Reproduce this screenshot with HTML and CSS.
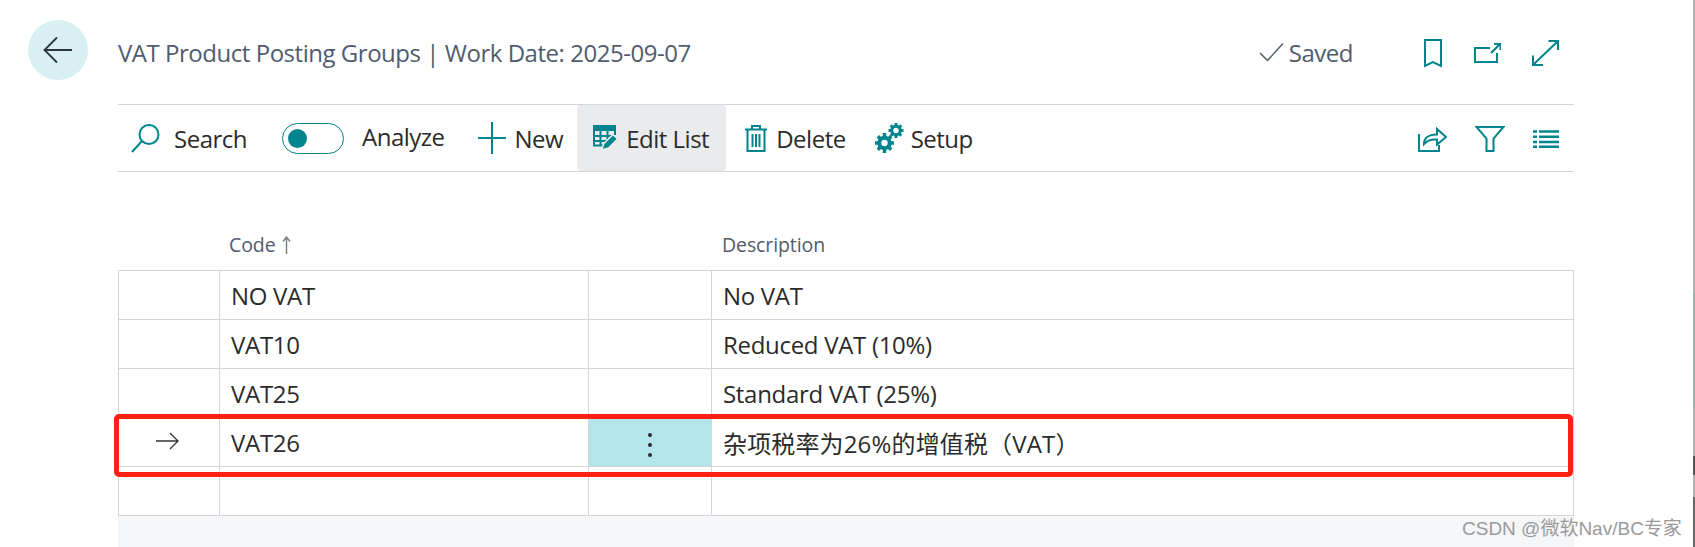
FILE: index.html
```html
<!DOCTYPE html>
<html lang="en">
<head>
    <meta charset="UTF-8">
    <title>VAT Product Posting Groups</title>
    <link rel="stylesheet" href="styles.css">
</head>
<body>
<div class="page">
    <div class="rail">
        <button class="back-button" aria-label="Back">
            <svg width="30" height="30" viewBox="0 0 30 30"><path d="M14 2.500 1.500 15 14 27.500M1.500 15H29"/></svg>
        </button>
    </div>
    <main class="content">
        <header class="title-bar">
            <h1 class="title">VAT Product Posting Groups | Work Date: 2025-09-07</h1>
            <div class="saved">
                <svg width="25" height="20" viewBox="0 0 25 20"><path d="M1 11l7.500 7.500L24 1.500"/></svg>
                <span>Saved</span>
            </div>
            <div class="title-icons">
                <svg class="icon" width="18" height="29" viewBox="0 0 18 29"><path d="M1 1h16v26l-8-4-8 4z"/></svg>
                <svg class="icon" width="27" height="20" viewBox="0 0 27 20"><path d="M23 10v9H1V5h15M17 10 26 1M20 1h6.500v6"/></svg>
                <svg class="icon" width="27" height="26" viewBox="0 0 27 26"><path d="M1.500 24.500 25.500 1.500M16.500 1h9.500v9M1 15.500V25h10"/></svg>
            </div>
        </header>

        <nav class="toolbar">
            <a class="tool tool-search">
                <svg class="icon" width="30" height="30" viewBox="0 0 30 30"><circle cx="18" cy="11.500" r="9.500"/><path d="M11 18 1 29"/></svg>
                <span>Search</span>
            </a>
            <a class="tool tool-analyze">
                <span class="toggle"><span class="toggle-knob"></span></span>
                <span class="analyze-label">Analyze</span>
            </a>
            <a class="tool tool-new">
                <svg class="icon" width="28" height="32" viewBox="0 0 28 32"><path d="M14 0v32M0 16h28"/></svg>
                <span>New</span>
            </a>
            <a class="tool tool-edit is-active">
                <svg width="27" height="26" viewBox="0 0 27 26">
                    <path class="fill" d="M0 0h23v6H0z"/>
                    <path class="icon-line" d="M1 6v14.500h10M1 11h20M1 16h13M7.500 6v14M14.500 6v9M22 6v4"/>
                    <path class="pencil" d="M8.500 25l2.500-6.500L20 9.500l4.500 4.500-9 9z"/>
                </svg>
                <span>Edit List</span>
            </a>
            <a class="tool tool-delete">
                <svg class="icon" width="22" height="27" viewBox="0 0 22 27"><path d="M0 4.500h22M7 4.500V1h8v3.500M2.500 4.500V26h17V4.500M7.500 9v13M11 9v13M14.500 9v13"/></svg>
                <span>Delete</span>
            </a>
            <a class="tool tool-setup">
                <svg width="29" height="30" viewBox="0 0 29 30">
                    <path class="gear-teeth" d="M21 0v15M13.500 7.500h15M15.700 2.200l10.600 10.600M26.300 2.200 15.700 12.800"/>
                    <circle class="gear-body" cx="21" cy="7.500" r="4.200"/>
                    <path class="gear-teeth big" d="M9.500 10v20M0 20h19M2.800 13.300l13.400 13.400M16.200 13.300 2.800 26.700"/>
                    <circle class="gear-body big" cx="9.500" cy="20" r="5.200"/>
                </svg>
                <span>Setup</span>
            </a>
            <div class="tool-icons">
                <svg class="icon" width="29" height="26" viewBox="0 0 29 26"><path d="M1 8v17h20v-6M6 18c0-6 5-10 13-9.500V3l9 8-9 7.500v-5c-6-.5-10 1-13 4.500z"/></svg>
                <svg class="icon" width="30" height="26" viewBox="0 0 30 26"><path d="M1.500 1h27L18.500 12.500V25h-7V12.500z"/></svg>
                <svg class="icon icon-list" width="26" height="18" viewBox="0 0 26 18"><path d="M0 1.500h4M6 1.500h20M0 6.800h4M6 6.800h20M0 12h4M6 12h20M0 16.800h4M6 16.800h20"/></svg>
            </div>
        </nav>

        <div class="grid-head">
            <div class="col-head head-code">
                <span>Code</span>
                <svg class="sort-arrow" width="9" height="18" viewBox="0 0 9 18"><path d="M4.500 1v17M1 5.500 4.500 1 8 5.500"/></svg>
            </div>
            <div class="col-head">Description</div>
        </div>

        <table class="grid">
            <tbody>
            <tr>
                <td class="cell-mark"></td><td class="cell-code">NO VAT</td><td class="cell-menu"></td><td>No VAT</td>
            </tr>
            <tr>
                <td class="cell-mark"></td><td class="cell-code">VAT10</td><td class="cell-menu"></td><td>Reduced VAT (10%)</td>
            </tr>
            <tr>
                <td class="cell-mark"></td><td class="cell-code">VAT25</td><td class="cell-menu"></td><td>Standard VAT (25%)</td>
            </tr>
            <tr class="current">
                <td class="cell-mark">
                    <svg width="23" height="18" viewBox="0 0 23 18"><path d="M0 9h22M14 1l8 8-8 8"/></svg>
                </td>
                <td class="cell-code">VAT26</td>
                <td class="cell-menu"><span class="dots"><i></i><i></i><i></i></span></td>
                <td class="cell-cjk">杂项税率为26%的增值税（VAT）</td>
            </tr>
            <tr>
                <td class="cell-mark"></td><td class="cell-code"></td><td class="cell-menu"></td><td></td>
            </tr>
            </tbody>
        </table>
        <div class="grid-foot"></div>
    </main>
</div>

<div class="highlight"></div>
<div class="watermark">CSDN @微软Nav/BC专家</div>
<div class="screen-edge"><i class="edge-a"></i><i class="edge-b"></i><i class="edge-c"></i><i class="edge-d"></i><i class="edge-e"></i><i class="edge-f"></i></div>
</body>
</html>
```

FILE: styles.css
```css
html, body {
    margin: 0;
    padding: 0;
    height: 547px;
    overflow: hidden;
    background-color: #fff;
    font-family: "Open Sans", "Noto Sans CJK SC", sans-serif;
    color: #2b2b2b;
}

.page {
    display: flex;
    height: 547px;
}

.rail {
    width: 118px;
    padding: 20px 0 0 28px;
    box-sizing: border-box;
}

.back-button {
    width: 60px;
    height: 60px;
    padding: 0;
    border: none;
    border-radius: 50%;
    background-color: #d8f0f3;
    display: flex;
    align-items: center;
    justify-content: center;
}

.back-button path {
    fill: none;
    stroke: #2f3438;
    stroke-width: 1.800;
}

.content {
    width: 1456px;
}

svg path, svg circle {
    fill: none;
}

.icon path, .icon circle, .icon-line {
    stroke: #00848d;
    stroke-width: 2;
}

.fill {
    fill: #00848d !important;
}

/* title row */
.title-bar {
    height: 104px;
    display: flex;
    align-items: center;
    border-bottom: 1px solid #d3d5da;
    box-sizing: content-box;
}

.title {
    flex: 1;
    margin: 0;
    font-size: 24px;
    font-weight: 400;
    color: #505c6d;
    letter-spacing: -0.47px;
    white-space: nowrap;
}

.saved {
    display: flex;
    align-items: center;
    gap: 5px;
    margin-right: 71px;
    font-size: 24px;
    letter-spacing: -0.5px;
    color: #505c6d;
}

.saved path {
    stroke: #505c6d;
    stroke-width: 1.500;
}

.title-icons {
    display: flex;
    align-items: center;
    gap: 31.500px;
    margin: 2px 15px 0 0;
}

/* action bar */
.toolbar {
    height: 66px;
    display: flex;
    align-items: center;
    border-bottom: 1px solid #d3d5da;
    font-size: 24px;
    letter-spacing: -0.5px;
}

.tool {
    display: flex;
    align-items: center;
    height: 100%;
    white-space: nowrap;
}

.tool-search {
    padding-left: 13px;
    gap: 13px;
}

.tool-analyze {
    margin-left: 35px;
    gap: 18px;
}

.toggle {
    width: 55px;
    height: 29px;
    border: 1px solid #00848d;
    border-radius: 16px;
    display: flex;
    align-items: center;
    padding-left: 5px;
}

.toggle-knob {
    width: 19px;
    height: 19px;
    border-radius: 50%;
    background-color: #00848d;
}

.analyze-label {
    margin-bottom: 4px;
}

.tool-new {
    margin-left: 33px;
    gap: 9px;
}

.tool-edit {
    margin-left: 14px;
    width: 149px;
    padding-left: 16px;
    gap: 6px;
    box-sizing: border-box;
    background-color: #eaebed;
    border-radius: 4px;
}

.pencil {
    fill: #00848d !important;
    stroke: #eaebed;
    stroke-width: 1.500;
}

.tool-delete {
    margin-left: 19px;
    gap: 9px;
}

.tool-setup {
    margin-left: 29px;
    gap: 7px;
}

.gear-teeth {
    stroke: #00848d;
    stroke-width: 3;
}

.gear-teeth.big {
    stroke-width: 3.500;
}

.gear-body {
    fill: #fff !important;
    stroke: #00848d;
    stroke-width: 3;
}

.gear-body.big {
    stroke-width: 4;
}

.tool-icons {
    margin: 2px 15px 0 auto;
    display: flex;
    align-items: center;
    gap: 28px;
}

.icon-list path {
    stroke-width: 2.500;
}

/* list */
.grid-head {
    height: 98px;
    display: flex;
    align-items: flex-end;
    box-sizing: border-box;
    padding-bottom: 12px;
    font-size: 19.500px;
    letter-spacing: -0.1px;
    color: #505c6d;
}

.col-head {
    margin-left: 383px;
    height: 27px;
    display: flex;
    align-items: center;
    gap: 6px;
}

.col-head.head-code {
    margin-left: 111px;
    width: 110px;
}

.sort-arrow path {
    stroke: #7b8288;
    stroke-width: 1.500;
}

.grid {
    width: 1456px;
    border-collapse: collapse;
    table-layout: fixed;
    font-size: 24px;
    letter-spacing: -0.3px;
}

.grid td {
    height: 49px;
    padding: 0 0 0 11px;
    border: 1px solid #d3d5da;
    box-sizing: border-box;
    white-space: nowrap;
}

.grid .cell-mark {
    width: 101px;
    padding: 0 3px 0 0;
    text-align: center;
}

.cell-mark svg {
    display: block;
    margin: 0 auto 2px;
}

.cell-mark path {
    stroke: #2f3438;
    stroke-width: 1.300;
}

.grid .cell-code {
    width: 369px;
}

.grid .cell-menu {
    width: 123px;
    padding: 0;
    text-align: center;
}

.grid .cell-cjk {
    letter-spacing: 0.15px;
}

.current .cell-menu {
    background-color: #b2e6ea;
}

.dots {
    display: inline-flex;
    flex-direction: column;
    gap: 6px;
    vertical-align: middle;
}

.dots i {
    width: 4px;
    height: 4px;
    border-radius: 50%;
    background-color: #2b2b2b;
}

.grid-foot {
    height: 32px;
    background-color: #f5f6f8;
}

/* marks on top of the screenshot */
.highlight {
    position: absolute;
    left: 114px;
    top: 414px;
    width: 1459px;
    height: 63px;
    box-sizing: border-box;
    border: 5px solid #ff2015;
    border-radius: 5px;
}

.watermark {
    position: absolute;
    left: 1462px;
    top: 513px;
    font-family: "Liberation Sans", "Noto Sans CJK SC", sans-serif;
    font-size: 19px;
    color: #9a9a9a;
    white-space: nowrap;
}

.screen-edge {
    position: absolute;
    right: 0;
    top: 0;
    width: 2px;
    height: 547px;
    display: flex;
    flex-direction: column;
}

.screen-edge i {
    display: block;
}

.edge-a { height: 293px; background-color: #b5b5b5; }
.edge-b { height: 115px; background-color: #9fb0b3; }
.edge-c { height: 48px; background-color: #b5b5b5; }
.edge-d { height: 19px; background-color: #555; }
.edge-e { height: 22px; background-color: #b5b5b5; }
.edge-f { height: 50px; background-color: #666; }
```
